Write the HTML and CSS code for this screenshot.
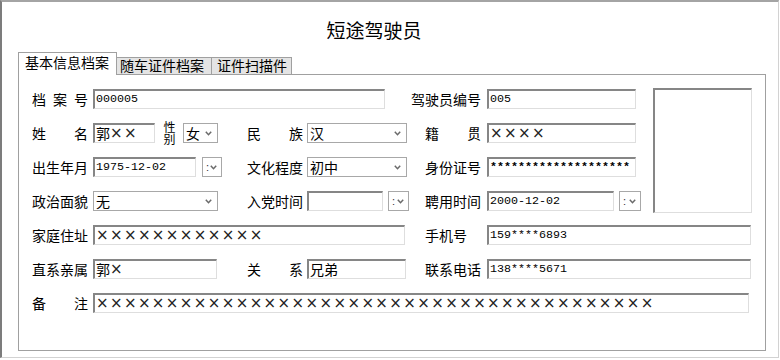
FILE: index.html
```html
<!DOCTYPE html>
<html lang="zh-CN">
<head>
<meta charset="utf-8">
<title>短途驾驶员</title>
<link rel="stylesheet" href="styles.css">
</head>
<body>
<div class="window">
  <h1 class="title">短途驾驶员</h1>
  <div class="tabs">
    <div class="tab active">基本信息档案</div>
    <div class="tab off tab2">随车证件档案</div>
    <div class="tab off tab3">证件扫描件</div>
  </div>
  <div class="panel">
    <div class="grid">
      <div class="photo"></div>

      <!-- row 1 -->
      <div class="lbl just c1"><span>档</span><span>案</span><span>号</span></div>
      <div class="field f s2-4 w292"><span class="num">000005</span></div>
      <div class="lbl c5 wide">驾驶员编号</div>
      <div class="field f c6 w149"><span class="num">005</span></div>

      <!-- row 2 -->
      <div class="lbl just c1"><span>姓</span><span>名</span></div>
      <div class="group f c2">
        <div class="field w62"><span>郭</span><span class="xs">××</span></div>
        <div class="vlbl">性别</div>
        <div class="sel w35 sexsel"><span>女</span><svg class="chev" width="7" height="5" viewBox="0 0 7 5"><polyline points="0.8,0.8 3.5,3.7 6.2,0.8" fill="none" stroke="#6a6a6a" stroke-width="1.5"/></svg></div>
      </div>
      <div class="lbl just c3"><span>民</span><span>族</span></div>
      <div class="sel f c4 w100"><span>汉</span><svg class="chev" width="7" height="5" viewBox="0 0 7 5"><polyline points="0.8,0.8 3.5,3.7 6.2,0.8" fill="none" stroke="#6a6a6a" stroke-width="1.5"/></svg></div>
      <div class="lbl just c5"><span>籍</span><span>贯</span></div>
      <div class="field f c6 w149"><span class="xs">××××</span></div>

      <!-- row 3 -->
      <div class="lbl just c1"><span>出</span><span>生</span><span>年</span><span>月</span></div>
      <div class="group f c2">
        <div class="field w103"><span class="num">1975-12-02</span></div>
        <div class="sel tiny w20 ml6"><span class="colon">:</span><svg class="chev" width="7" height="5" viewBox="0 0 7 5"><polyline points="0.8,0.8 3.5,3.7 6.2,0.8" fill="none" stroke="#6a6a6a" stroke-width="1.5"/></svg></div>
      </div>
      <div class="lbl just c3"><span>文</span><span>化</span><span>程</span><span>度</span></div>
      <div class="sel f c4 w100"><span>初中</span><svg class="chev" width="7" height="5" viewBox="0 0 7 5"><polyline points="0.8,0.8 3.5,3.7 6.2,0.8" fill="none" stroke="#6a6a6a" stroke-width="1.5"/></svg></div>
      <div class="lbl just c5"><span>身</span><span>份</span><span>证</span><span>号</span></div>
      <div class="field f c6 w149"><span class="num stars">********************</span></div>

      <!-- row 4 -->
      <div class="lbl just c1"><span>政</span><span>治</span><span>面</span><span>貌</span></div>
      <div class="sel f c2 w125"><span>无</span><svg class="chev" width="7" height="5" viewBox="0 0 7 5"><polyline points="0.8,0.8 3.5,3.7 6.2,0.8" fill="none" stroke="#6a6a6a" stroke-width="1.5"/></svg></div>
      <div class="lbl just c3"><span>入</span><span>党</span><span>时</span><span>间</span></div>
      <div class="group f c4">
        <div class="field w76"></div>
        <div class="sel tiny w21 ml5"><span class="colon">:</span><svg class="chev" width="7" height="5" viewBox="0 0 7 5"><polyline points="0.8,0.8 3.5,3.7 6.2,0.8" fill="none" stroke="#6a6a6a" stroke-width="1.5"/></svg></div>
      </div>
      <div class="lbl just c5"><span>聘</span><span>用</span><span>时</span><span>间</span></div>
      <div class="group f c6">
        <div class="field w127"><span class="num">2000-12-02</span></div>
        <div class="sel tiny w22 ml5"><span class="colon">:</span><svg class="chev" width="7" height="5" viewBox="0 0 7 5"><polyline points="0.8,0.8 3.5,3.7 6.2,0.8" fill="none" stroke="#6a6a6a" stroke-width="1.5"/></svg></div>
      </div>

      <!-- row 5 -->
      <div class="lbl just c1"><span>家</span><span>庭</span><span>住</span><span>址</span></div>
      <div class="field f s2-4 w312"><span class="xs">××××××××××××</span></div>
      <div class="lbl c5">手机号</div>
      <div class="field f s6-7 w264"><span class="num">159****6893</span></div>

      <!-- row 6 -->
      <div class="lbl just c1"><span>直</span><span>系</span><span>亲</span><span>属</span></div>
      <div class="field f c2 w124"><span>郭</span><span class="xs">×</span></div>
      <div class="lbl just c3"><span>关</span><span>系</span></div>
      <div class="field f c4 w99"><span>兄弟</span></div>
      <div class="lbl just c5"><span>联</span><span>系</span><span>电</span><span>话</span></div>
      <div class="field f s6-7 w264"><span class="num">138****5671</span></div>

      <!-- row 7 -->
      <div class="lbl just c1"><span>备</span><span>注</span></div>
      <div class="field f s2-7 w656"><span class="xs">××××××××××××××××××××××××××××××××××××××××</span></div>
    </div>
  </div>
</div>
</body>
</html>
```
FILE: styles.css
```css
html, body {
  margin: 0;
  padding: 0;
  background: #ffffff;
}

body {
  font-family: "Noto Sans CJK SC", "Noto Sans", sans-serif;
  color: #000;
}

.window {
  width: 779px;
  height: 358px;
  box-sizing: border-box;
  border-left: 2px solid #7c7c7c;
  border-top: 2px solid #a4a4a4;
  border-right: 1px solid #d2d2d2;
  border-bottom: 1px solid #d2d2d2;
  background: #fff;
}

.title {
  margin: 0;
  height: 50px;
  box-sizing: border-box;
  padding: 17px 32px 0 0;
  font-size: 19px;
  font-weight: normal;
  line-height: 22px;
  text-align: center;
}

.tabs {
  display: flex;
  align-items: flex-end;
  height: 22px;
  margin-left: 16px;
}

.tab {
  box-sizing: border-box;
  font-size: 14px;
  border: 1px solid #a0a0a0;
  border-bottom: none;
  white-space: nowrap;
}

.tab.active {
  width: 99px;
  height: 23px;
  margin-bottom: -1px;
  background: #fff;
  position: relative;
  z-index: 1;
  padding-left: 6px;
  line-height: 19px;
}

.tab.off {
  height: 17px;
  background: #e4e4e4;
  border-left: none;
  line-height: 15px;
}

.tab2 { width: 95px; padding-left: 3px; }
.tab3 { width: 80px; padding-left: 5px; }

.panel {
  margin-left: 16px;
  width: 748px;
  height: 277px;
  box-sizing: border-box;
  border: 1px solid #a0a0a0;
  padding: 14px 0 0 13px;
}

.grid {
  display: grid;
  grid-template-columns: 56px 159px 55px 123px 57px 171px 99px;
  grid-auto-rows: 20px;
  row-gap: 14px;
  align-items: center;
}

.c1 { grid-column: 1; }
.c2 { grid-column: 2; }
.c3 { grid-column: 3; }
.c4 { grid-column: 4; }
.c5 { grid-column: 5; }
.c6 { grid-column: 6; }
.s2-4 { grid-column: 2 / 5; }
.s6-7 { grid-column: 6 / 8; }
.s2-7 { grid-column: 2 / 8; }

.lbl {
  font-size: 14px;
  line-height: 20px;
  white-space: nowrap;
}

.just {
  display: flex;
  justify-content: space-between;
  width: 56px;
}

.wide { margin-left: -14px; }

.f {
  margin-left: 5px;
  justify-self: start;
}

.group {
  display: flex;
  align-items: center;
  height: 20px;
}

.field {
  box-sizing: border-box;
  height: 20px;
  border-top: 2px solid #868686;
  border-left: 2px solid #868686;
  border-right: 1px solid #dedede;
  border-bottom: 1px solid #dedede;
  background: #fff;
  padding-left: 1px;
  font-size: 14px;
  line-height: 17px;
  white-space: nowrap;
  overflow: hidden;
  display: flex;
  align-items: center;
}

.num {
  font-family: "Liberation Mono", monospace;
  font-size: 11.67px;
}

.stars {
  font-weight: bold;
}

.xs {
  font-family: "DejaVu Sans", sans-serif;
  font-size: 15px;
  letter-spacing: 1.4px;
  color: #222;
}

.vlbl {
  writing-mode: vertical-rl;
  font-size: 12px;
  line-height: 13px;
  letter-spacing: 0;
  margin-left: 8px;
  width: 13px;
  height: 24px;
  flex: none;
}

.sel {
  box-sizing: border-box;
  height: 20px;
  border: 1px solid #a8a8a8;
  background: #fff;
  display: flex;
  align-items: center;
  justify-content: space-between;
  padding: 0 5px 0 2px;
  font-size: 14px;
  line-height: 18px;
  white-space: nowrap;
}

.sexsel { margin-left: 7px; }

.sel.tiny { padding: 0 4px 0 3px; }

.colon {
  font-family: "Liberation Sans", sans-serif;
  font-size: 11px;
  color: #333;
}

.chev { display: block; flex: none; }

.ml5 { margin-left: 5px; }
.ml6 { margin-left: 6px; }

.w20 { width: 20px; }
.w21 { width: 21px; }
.w22 { width: 22px; }
.w35 { width: 35px; }
.w62 { width: 62px; }
.w76 { width: 76px; }
.w99 { width: 99px; }
.w100 { width: 100px; }
.w103 { width: 103px; }
.w124 { width: 124px; }
.w125 { width: 125px; }
.w127 { width: 127px; }
.w149 { width: 149px; }
.w264 { width: 264px; }
.w292 { width: 292px; }
.w312 { width: 312px; }
.w656 { width: 656px; }

.photo {
  grid-column: 7;
  grid-row: 1 / span 4;
  align-self: stretch;
  margin: -1px 0 -2px 0;
  box-sizing: border-box;
  border-top: 2px solid #868686;
  border-left: 2px solid #868686;
  border-right: 1px solid #dedede;
  border-bottom: 1px solid #dedede;
  background: #fff;
}
```
